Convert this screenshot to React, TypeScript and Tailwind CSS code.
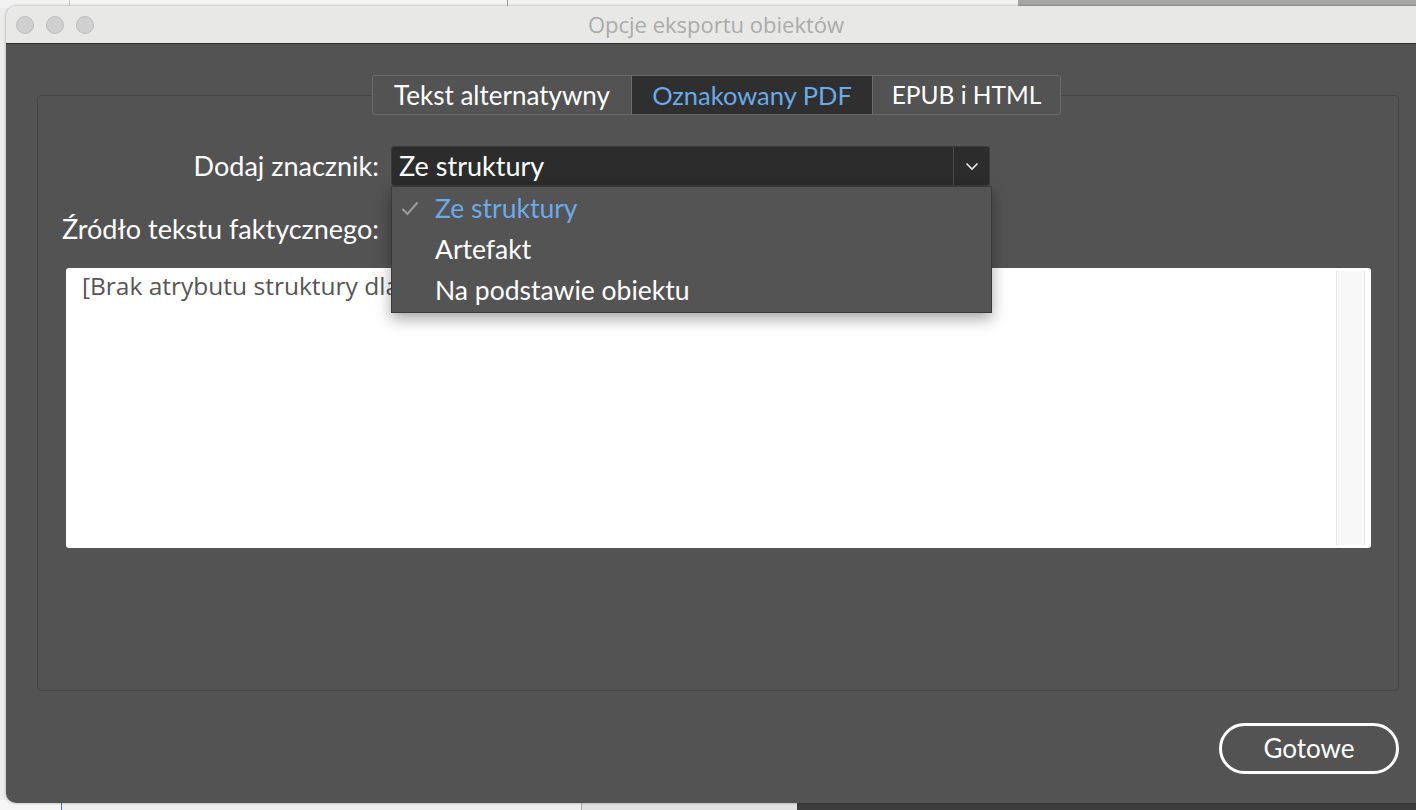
import React from "react";

const F = { fontFamily: "Lato, 'Open Sans', sans-serif" };

export default function App() {
  return (
    <div className="relative w-[1416px] h-[810px] overflow-hidden bg-[#ececec]" style={F}>
      {/* desktop behind */}
      <div className="absolute left-0 top-0 w-full h-[8px] flex">
        <div className="w-[70px] border-r border-[#c8c8c8] bg-[#f2f2f2]" />
        <div className="w-[438px] border-r border-[#9a9a9a] bg-[#f4f4f4]" />
        <div className="w-[510px] bg-[#f2f2f2]" />
        <div className="flex-1 bg-[#a6a6a6]" />
      </div>
      <div className="absolute left-0 bottom-0 w-full h-[10px] flex">
        <div className="w-[62px] bg-[#f5f5f5] border-r border-[#3a78d6]" />
        <div className="w-[520px] bg-[#efefef] border-r border-[#aaa]" />
        <div className="w-[215px] bg-[#e0e0e0]" />
        <div className="flex-1 bg-[#3d3d3d]" />
      </div>

      {/* window */}
      <div className="absolute left-[6px] top-[6px] w-[1430px] h-[797px] rounded-[10px] overflow-hidden flex flex-col shadow-[0_0_3px_rgba(0,0,0,0.35)]">
        <div className="h-[38px] bg-[#e8e8e6] border-b border-[#2e2e2e] flex items-center relative shrink-0">
          <div className="flex gap-[12px] pl-[10px]">
            <div className="w-[18px] h-[18px] rounded-full bg-[#d0d0d0] border border-[#bcbcbc]" />
            <div className="w-[18px] h-[18px] rounded-full bg-[#d0d0d0] border border-[#bcbcbc]" />
            <div className="w-[18px] h-[18px] rounded-full bg-[#d0d0d0] border border-[#bcbcbc]" />
          </div>
          <div className="absolute left-0 right-[10px] text-center text-[22px] text-[#ababab]" style={{ fontFamily: "'Open Sans', sans-serif" }}>
            Opcje eksportu obiektów
          </div>
        </div>

        <div className="flex-1 bg-[#535353] relative flex flex-col">
          {/* group box */}
          <div className="ml-[31px] mt-[51px] w-[1362px] h-[596px] border border-[#474747] rounded-[4px] flex flex-col">
            {/* tabs */}
            <div className="flex justify-center -mt-[21px] pr-[3px]">
              <div className="flex border border-[#6b6b6b] rounded-[3px] h-[40px] bg-[#535353] overflow-hidden">
                <div className="w-[259px] flex items-center justify-center text-[26px] text-white border-r border-[#6b6b6b]">Tekst alternatywny</div>
                <div className="w-[241px] flex items-center justify-center text-[25.5px] text-[#6aabe8] bg-[#2f2f2f] border-r border-[#6b6b6b]">Oznakowany PDF</div>
                <div className="w-[187px] flex items-center justify-center text-[24.5px] text-white">EPUB i HTML</div>
              </div>
            </div>

            {/* rows */}
            <div className="flex items-center mt-[31px] h-[40px]">
              <div className="w-[341px] text-right text-[27px] text-white">Dodaj znacznik:</div>
              <div className="ml-[12px] w-[599px] h-[40px] bg-[#2c2c2c] border border-[#3c3c3c] rounded-[3px] flex items-center relative">
                <div className="flex-1 pl-[7px] text-[27px] text-white">Ze struktury</div>
                <div className="w-[36px] h-full border-l border-[#4a4a4a] flex items-center justify-center">
                  <svg width="14" height="9" viewBox="0 0 14 9"><path d="M1.5 1.5 L7 7 L12.5 1.5" fill="none" stroke="#e8e8e8" strokeWidth="1.6" /></svg>
                </div>
                {/* open dropdown */}
                <div className="absolute left-[-1px] top-[39px] w-[601px] h-[127px] bg-[#545454] border border-[#3a3a3a] shadow-[0_6px_14px_rgba(0,0,0,0.35)] z-10 flex flex-col pt-[1px]">
                  <div className="h-[42px] flex items-center">
                    <div className="w-[43px] flex justify-end pr-[16px]">
                      <svg width="18" height="15" viewBox="0 0 18 15"><path d="M1.5 8 L6.5 13 L16.5 1.5" fill="none" stroke="#9a9a9a" strokeWidth="2.2" /></svg>
                    </div>
                    <span className="text-[26.5px] text-[#6aabe8]">Ze struktury</span>
                  </div>
                  <div className="h-[42px] flex items-center pl-[43px] text-[26.5px] text-white">Artefakt</div>
                  <div className="h-[42px] flex items-center pl-[43px] text-[26.5px] text-white">Na podstawie obiektu</div>
                </div>
              </div>
            </div>

            <div className="flex items-center mt-[23px] h-[40px]">
              <div className="w-[341px] text-right text-[27px] text-white">Źródło tekstu faktycznego:</div>
            </div>

            <div className="ml-[28px] mt-[19px] w-[1305px] h-[280px] bg-white rounded-[3px] flex">
              <div className="flex-1 pl-[16px] pt-[2px] text-[24.5px] leading-[32px] text-[#555555]" style={{ fontFamily: "'Open Sans', sans-serif" }}>
                [Brak atrybutu struktury dla obiektu]
              </div>
              <div className="w-[29px] my-[3px] mr-[6px] bg-[#f8f8f8] border-x border-[#e6e6e6]" />
            </div>
          </div>

          {/* button */}
          <div className="flex justify-end pr-[37px] mt-[32px]">
            <div className="w-[180px] h-[51px] rounded-full border-[3px] border-white flex items-center justify-center text-[26px] text-white">
              Gotowe
            </div>
          </div>
        </div>
      </div>
    </div>
  );
}
